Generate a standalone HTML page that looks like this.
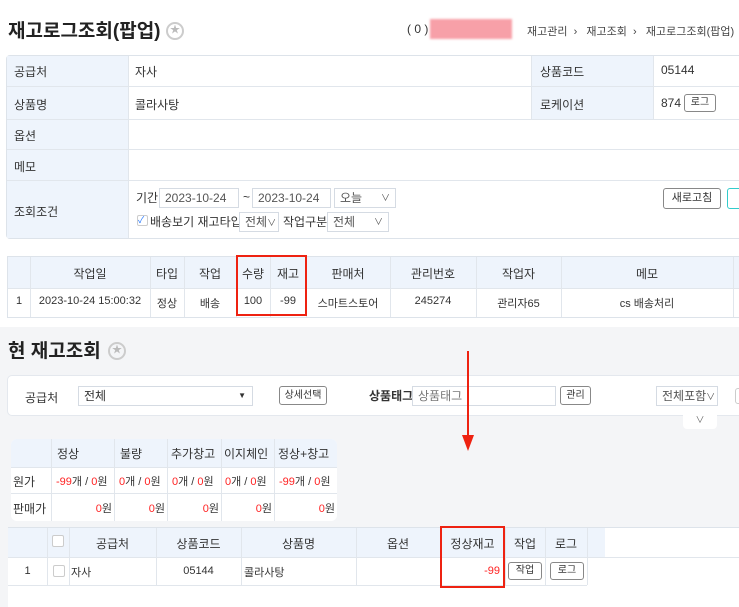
<!DOCTYPE html>
<html><head><meta charset="utf-8"><style>
*{box-sizing:border-box;margin:0;padding:0}
body{width:739px;height:600px;overflow:hidden;background:#f4f5f7;font-family:"Liberation Sans","Noto Sans CJK KR",sans-serif;font-size:12px;color:#333;position:relative}
.a{position:absolute}
.top{left:0;top:0;width:739px;height:327px;background:#fff}
.t{white-space:nowrap}
.lab{background:#eef4fc}
.bd{border:1px solid #dde3ea}
.btn{position:absolute;border:1px solid #888;border-radius:3px;background:#fff;font-size:10px;text-align:center;white-space:nowrap}
.sel{position:absolute;border:1px solid #d5dbe3;background:#fff;font-size:12px;padding-left:5px;white-space:nowrap;color:#555}
.star{position:absolute;width:18px;height:18px;border:2px solid #ccc;border-radius:50%;color:#bbb;font-size:10px;text-align:center;line-height:14px}
.red{color:#f22}
.vl{position:absolute;width:1px;background:#e1e6ec}
.hl{position:absolute;height:1px;background:#e1e6ec}
</style></head><body>
<div class="a top"></div>
<div class="a t" style="left:8px;top:16px;font-size:19px;font-weight:bold;color:#222">재고로그조회(팝업)</div>
<div class="star" style="left:166px;top:22px">★</div>
<div class="a t" style="left:407px;top:22px;font-size:12px">( 0 )</div>
<div class="a" style="left:430px;top:19px;width:82px;height:20px;background:#f7a0a8;filter:blur(1px)"></div>
<div class="a t" style="left:527px;top:23px;font-size:11px;color:#444">재고관리 &nbsp;›&nbsp;&nbsp; 재고조회 &nbsp;›&nbsp;&nbsp; 재고로그조회(팝업)</div>

<div class="a bd" style="left:6px;top:55px;width:740px;height:184px;border-radius:4px;background:#fff"></div>
<div class="a lab" style="left:7px;top:56px;width:121px;height:182px"></div>
<div class="a lab" style="left:531px;top:56px;width:122px;height:63px"></div>
<div class="hl" style="left:7px;top:86px;width:732px"></div>
<div class="hl" style="left:7px;top:119px;width:732px"></div>
<div class="hl" style="left:7px;top:149px;width:732px"></div>
<div class="hl" style="left:7px;top:180px;width:732px"></div>
<div class="vl" style="left:128px;top:56px;height:182px"></div>
<div class="vl" style="left:531px;top:56px;height:63px"></div>
<div class="vl" style="left:653px;top:56px;height:63px"></div>
<div class="a t" style="left:14px;top:63px">공급처</div>
<div class="a t" style="left:135px;top:63px">자사</div>
<div class="a t" style="left:540px;top:63px">상품코드</div>
<div class="a t" style="left:661px;top:63px">05144</div>
<div class="a t" style="left:14px;top:96px">상품명</div>
<div class="a t" style="left:135px;top:96px">콜라사탕</div>
<div class="a t" style="left:540px;top:96px">로케이션</div>
<div class="a t" style="left:661px;top:96px">874</div>
<div class="btn" style="left:684px;top:94px;width:32px;height:18px;line-height:16px">로그</div>
<div class="a t" style="left:14px;top:127px">옵션</div>
<div class="a t" style="left:14px;top:158px">메모</div>
<div class="a t" style="left:14px;top:203px">조회조건</div>
<div class="a t" style="left:136px;top:189px">기간</div>
<div class="sel" style="left:159px;top:188px;width:80px;height:20px;line-height:18px">2023-10-24</div>
<div class="a t" style="left:243px;top:190px">~</div>
<div class="sel" style="left:252px;top:188px;width:79px;height:20px;line-height:18px">2023-10-24</div>
<div class="sel" style="left:334px;top:188px;width:62px;height:20px;line-height:18px">오늘 <span style="float:right;margin-right:5px;font-size:9px">∨</span></div>
<div class="a" style="left:137px;top:215px;width:11px;height:11px;border:1px solid #ccc;border-radius:2px;font-size:9px;color:#27f;line-height:9px">✓</div>
<div class="a t" style="left:150px;top:213px">배송보기 재고타입</div>
<div class="sel" style="left:239px;top:212px;width:40px;height:20px;line-height:18px">전체<span style="font-size:9px">∨</span></div>
<div class="a t" style="left:283px;top:213px">작업구분</div>
<div class="sel" style="left:327px;top:212px;width:62px;height:20px;line-height:18px">전체 <span style="float:right;margin-right:5px;font-size:9px">∨</span></div>
<div class="btn" style="left:663px;top:188px;width:58px;height:21px;line-height:19px;font-size:11px">새로고침</div>
<div class="a" style="left:727px;top:188px;width:20px;height:21px;border:1px solid #3cc;border-radius:3px"></div>

<!-- log table -->
<div class="a bd" style="left:7px;top:256px;width:740px;height:62px;background:#fff"></div>
<div class="a lab" style="left:8px;top:257px;width:731px;height:31px"></div>
<div class="hl" style="left:8px;top:288px;width:731px"></div>
<div class="vl" style="left:30px;top:257px;height:60px"></div>
<div class="vl" style="left:150px;top:257px;height:60px"></div>
<div class="vl" style="left:184px;top:257px;height:60px"></div>
<div class="vl" style="left:236px;top:257px;height:60px"></div>
<div class="vl" style="left:270px;top:257px;height:60px"></div>
<div class="vl" style="left:306px;top:257px;height:60px"></div>
<div class="vl" style="left:390px;top:257px;height:60px"></div>
<div class="vl" style="left:476px;top:257px;height:60px"></div>
<div class="vl" style="left:561px;top:257px;height:60px"></div>
<div class="vl" style="left:733px;top:257px;height:60px"></div>
<div class="a t" style="left:30px;top:265px;width:120px;text-align:center">작업일</div>
<div class="a t" style="left:150px;top:265px;width:34px;text-align:center">타입</div>
<div class="a t" style="left:184px;top:265px;width:52px;text-align:center">작업</div>
<div class="a t" style="left:236px;top:265px;width:34px;text-align:center">수량</div>
<div class="a t" style="left:270px;top:265px;width:36px;text-align:center">재고</div>
<div class="a t" style="left:306px;top:265px;width:84px;text-align:center">판매처</div>
<div class="a t" style="left:390px;top:265px;width:86px;text-align:center">관리번호</div>
<div class="a t" style="left:476px;top:265px;width:85px;text-align:center">작업자</div>
<div class="a t" style="left:561px;top:265px;width:172px;text-align:center">메모</div>
<div class="a t" style="left:8px;top:295px;width:22px;text-align:center;font-size:11px">1</div>
<div class="a t" style="left:30px;top:295px;width:120px;text-align:center;font-size:11px">2023-10-24 15:00:32</div>
<div class="a t" style="left:150px;top:295px;width:34px;text-align:center;font-size:11px">정상</div>
<div class="a t" style="left:184px;top:295px;width:52px;text-align:center;font-size:11px">배송</div>
<div class="a t" style="left:236px;top:295px;width:34px;text-align:center;font-size:11px">100</div>
<div class="a t" style="left:270px;top:295px;width:36px;text-align:center;font-size:11px">-99</div>
<div class="a t" style="left:306px;top:295px;width:84px;text-align:center;font-size:11px">스마트스토어</div>
<div class="a t" style="left:390px;top:295px;width:86px;text-align:center;font-size:11px">245274</div>
<div class="a t" style="left:476px;top:295px;width:85px;text-align:center;font-size:11px">관리자65</div>
<div class="a t" style="left:561px;top:295px;width:172px;text-align:center;font-size:11px">cs 배송처리</div>
<div class="a" style="left:236px;top:255px;width:71px;height:61px;border:2px solid #e21"></div>

<!-- current stock -->
<div class="a t" style="left:8px;top:336px;font-size:19px;font-weight:bold;color:#222">현 재고조회</div>
<div class="star" style="left:108px;top:342px">★</div>
<div class="a" style="left:7px;top:375px;width:740px;height:41px;background:#fff;border:1px solid #e4e8ee;border-radius:5px"></div>
<div class="a t" style="left:25px;top:389px">공급처</div>
<div class="sel" style="left:78px;top:386px;width:175px;height:20px;line-height:18px;color:#333">전체<span style="float:right;margin-right:6px;font-size:8px">▼</span></div>
<div class="btn" style="left:279px;top:386px;width:48px;height:19px;line-height:17px">상세선택</div>
<div class="a t" style="left:369px;top:387px;font-weight:bold">상품태그</div>
<div class="sel" style="left:412px;top:386px;width:144px;height:20px;line-height:18px;color:#777">상품태그</div>
<div class="btn" style="left:560px;top:386px;width:31px;height:19px;line-height:17px">관리</div>
<div class="sel" style="left:656px;top:386px;width:62px;height:20px;line-height:18px">전체포함<span style="font-size:9px">∨</span></div>
<div class="a" style="left:735px;top:388px;width:10px;height:16px;border:1px solid #ccc;border-radius:3px"></div>
<div class="a" style="left:683px;top:412px;width:34px;height:17px;background:#fff;border-radius:0 0 4px 4px;text-align:center;font-size:9px;color:#666;line-height:17px">∨</div>
<div class="a" style="left:467px;top:351px;width:2px;height:84px;background:#e21"></div>
<div class="a" style="left:462px;top:435px;width:0;height:0;border-left:6px solid transparent;border-right:6px solid transparent;border-top:16px solid #e21"></div>

<!-- summary -->
<div class="a" style="left:11px;top:439px;width:326px;height:82px;background:#fff;border-radius:6px;overflow:hidden">
<div class="a lab" style="left:0;top:0;width:326px;height:28px"></div>
<div class="hl" style="left:0;top:28px;width:326px"></div>
<div class="hl" style="left:0;top:54px;width:326px"></div>
<div class="vl" style="left:40px;top:0;height:82px"></div>
<div class="vl" style="left:103px;top:0;height:82px"></div>
<div class="vl" style="left:156px;top:0;height:82px"></div>
<div class="vl" style="left:210px;top:0;height:82px"></div>
<div class="vl" style="left:263px;top:0;height:82px"></div>
<div class="a t" style="left:46px;top:6px">정상</div>
<div class="a t" style="left:109px;top:6px">불량</div>
<div class="a t" style="left:160px;top:6px">추가창고</div>
<div class="a t" style="left:213px;top:6px">이지체인</div>
<div class="a t" style="left:267px;top:6px">정상+창고</div>
<div class="a t" style="left:2px;top:34px">원가</div>
<div class="a t" style="left:45px;top:34px;font-size:11px"><span class="red">-99</span>개 / <span class="red">0</span>원</div>
<div class="a t" style="left:108px;top:34px;font-size:11px"><span class="red">0</span>개 / <span class="red">0</span>원</div>
<div class="a t" style="left:161px;top:34px;font-size:11px"><span class="red">0</span>개 / <span class="red">0</span>원</div>
<div class="a t" style="left:214px;top:34px;font-size:11px"><span class="red">0</span>개 / <span class="red">0</span>원</div>
<div class="a t" style="left:268px;top:34px;font-size:11px"><span class="red">-99</span>개 / <span class="red">0</span>원</div>
<div class="a t" style="left:2px;top:61px">판매가</div>
<div class="a t" style="left:40px;top:61px;width:61px;text-align:right;font-size:11px"><span class="red">0</span>원</div>
<div class="a t" style="left:103px;top:61px;width:51px;text-align:right;font-size:11px"><span class="red">0</span>원</div>
<div class="a t" style="left:156px;top:61px;width:52px;text-align:right;font-size:11px"><span class="red">0</span>원</div>
<div class="a t" style="left:210px;top:61px;width:51px;text-align:right;font-size:11px"><span class="red">0</span>원</div>
<div class="a t" style="left:263px;top:61px;width:61px;text-align:right;font-size:11px"><span class="red">0</span>원</div>
</div>

<!-- bottom table -->
<div class="a" style="left:8px;top:527px;width:740px;height:80px;background:#fff;border-top:1px solid #dde3ea"></div>
<div class="a lab" style="left:8px;top:528px;width:597px;height:29px"></div>
<div class="hl" style="left:8px;top:557px;width:731px"></div>
<div class="hl" style="left:8px;top:585px;width:579px"></div>
<div class="vl" style="left:47px;top:528px;height:57px"></div>
<div class="vl" style="left:69px;top:528px;height:57px"></div>
<div class="vl" style="left:156px;top:528px;height:57px"></div>
<div class="vl" style="left:241px;top:528px;height:57px"></div>
<div class="vl" style="left:356px;top:528px;height:57px"></div>
<div class="vl" style="left:440px;top:528px;height:57px"></div>
<div class="vl" style="left:505px;top:528px;height:57px"></div>
<div class="vl" style="left:545px;top:528px;height:57px"></div>
<div class="vl" style="left:587px;top:528px;height:57px"></div>
<div class="a" style="left:52px;top:535px;width:12px;height:12px;border:1px solid #ccc;border-radius:2px;background:#fff"></div>
<div class="a t" style="left:69px;top:535px;width:87px;text-align:center">공급처</div>
<div class="a t" style="left:156px;top:535px;width:85px;text-align:center">상품코드</div>
<div class="a t" style="left:241px;top:535px;width:115px;text-align:center">상품명</div>
<div class="a t" style="left:356px;top:535px;width:84px;text-align:center">옵션</div>
<div class="a t" style="left:440px;top:535px;width:65px;text-align:center">정상재고</div>
<div class="a t" style="left:505px;top:535px;width:40px;text-align:center">작업</div>
<div class="a t" style="left:545px;top:535px;width:42px;text-align:center">로그</div>
<div class="a t" style="left:8px;top:565px;width:39px;text-align:center;font-size:11px">1</div>
<div class="a" style="left:53px;top:565px;width:12px;height:12px;border:1px solid #ccc;border-radius:2px"></div>
<div class="a t" style="left:71px;top:564px;font-size:11px">자사</div>
<div class="a t" style="left:156px;top:565px;width:85px;text-align:center;font-size:11px">05144</div>
<div class="a t" style="left:244px;top:564px;font-size:11px">콜라사탕</div>
<div class="a t red" style="left:440px;top:565px;width:60px;text-align:right;font-size:11px">-99</div>
<div class="btn" style="left:508px;top:562px;width:34px;height:18px;line-height:16px">작업</div>
<div class="btn" style="left:550px;top:562px;width:34px;height:18px;line-height:16px">로그</div>
<div class="a" style="left:440px;top:526px;width:65px;height:62px;border:2px solid #e21"></div>
</body></html>
